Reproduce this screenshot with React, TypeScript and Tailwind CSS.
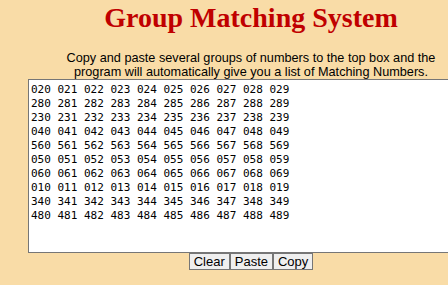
const rows = [
  '020 021 022 023 024 025 026 027 028 029',
  '280 281 282 283 284 285 286 287 288 289',
  '230 231 232 233 234 235 236 237 238 239',
  '040 041 042 043 044 045 046 047 048 049',
  '560 561 562 563 564 565 566 567 568 569',
  '050 051 052 053 054 055 056 057 058 059',
  '060 061 062 063 064 065 066 067 068 069',
  '010 011 012 013 014 015 016 017 018 019',
  '340 341 342 343 344 345 346 347 348 349',
  '480 481 482 483 484 485 486 487 488 489',
]

export default function App() {
  return (
    <div className="w-[448px] h-[285px] overflow-hidden bg-[#f9dca7]">
      <div className="ml-[28px] w-[446px] text-center">
        {/* Title */}
        <h1 className="pt-[2px] text-[28px] leading-[32px] font-bold text-[#c00000] font-['Liberation_Serif',serif]">
          Group Matching System
        </h1>

        {/* Instructions */}
        <p className="mt-[17px] text-[12.7px] leading-[14px] text-black font-['Liberation_Sans',Arial,sans-serif]">
          Copy and paste several groups of numbers to the top box and the
          <br />
          program will automatically give you a list of Matching Numbers.
        </p>

        {/* Number box */}
        <textarea
          defaultValue={rows.join('\n')}
          spellCheck={false}
          className="block w-[446px] h-[174px] bg-white border border-[#767676] px-[2px] py-[3px] text-left text-[11px] leading-[14px] text-black resize-none outline-none font-['DejaVu_Sans_Mono',monospace]"
        />

        {/* Actions */}
        <div className="flex justify-center">
          {['Clear', 'Paste', 'Copy'].map((label) => (
            <button
              key={label}
              className="h-[17px] px-[4px] bg-[#efefef] border border-[#767676] text-[13px] leading-[15px] text-black font-['Liberation_Sans',Arial,sans-serif]"
            >
              {label}
            </button>
          ))}
        </div>
      </div>
    </div>
  )
}
